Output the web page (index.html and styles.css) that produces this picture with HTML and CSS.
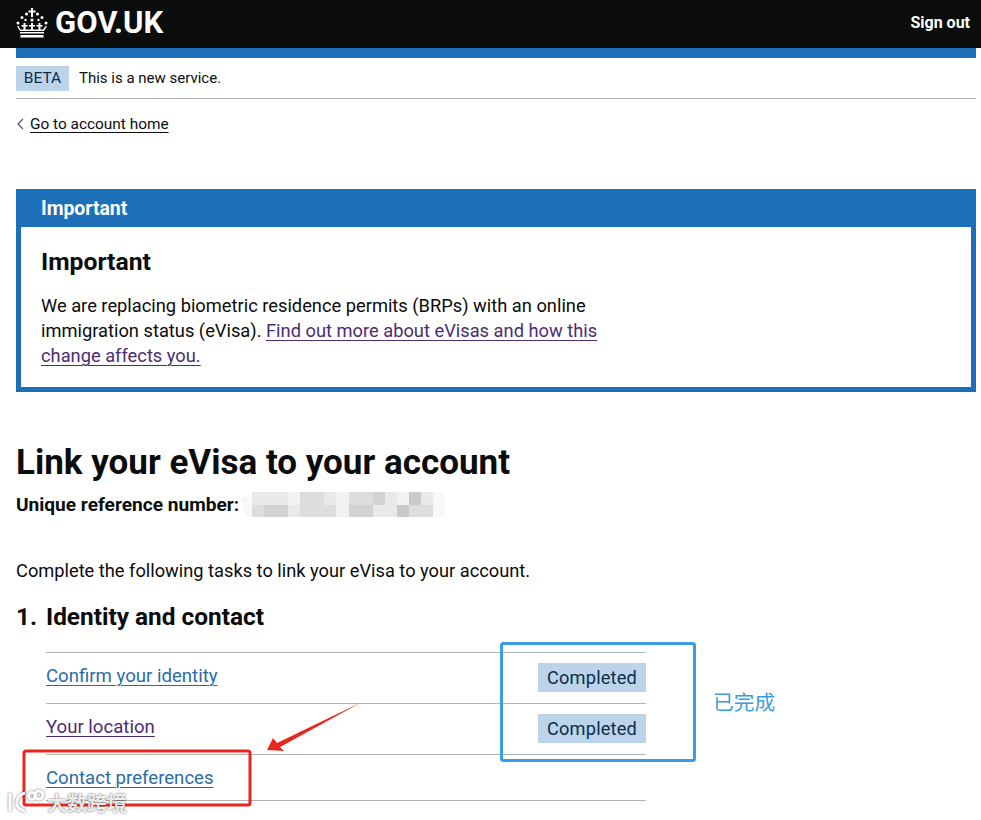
FILE: index.html
```html
<!DOCTYPE html>
<html lang="en">
<head>
<meta charset="utf-8">
<title>Link your eVisa to your account</title>
<link rel="stylesheet" href="styles.css">
</head>
<body>
<header class="masthead">
  <a class="logo" href="#">
    <svg class="crown" viewBox="0 0 32 30" width="32" height="30" aria-hidden="true">
      <g fill="#fff">
        <rect x="15" y="0" width="2" height="9"/><rect x="12.5" y="2.5" width="7" height="2"/>
        <circle cx="10.5" cy="6" r="1.5"/><circle cx="21.5" cy="6" r="1.5"/>
        <circle cx="6" cy="9.5" r="1.5"/><circle cx="26" cy="9.5" r="1.5"/>
        <circle cx="2" cy="15" r="1.5"/><circle cx="30" cy="15" r="1.5"/>
        <circle cx="16" cy="12" r="1.6"/><circle cx="9.5" cy="12" r="1.2"/><circle cx="22.5" cy="12" r="1.2"/>
        <rect x="15" y="15" width="2" height="8"/><rect x="13" y="17" width="6" height="1.6"/>
        <rect x="7.5" y="15" width="2" height="8"/><rect x="5.5" y="17" width="6" height="1.6"/>
        <rect x="22.5" y="15" width="2" height="8"/><rect x="20.5" y="17" width="6" height="1.6"/>
        <path d="M1 18l3 5h24l3-5-1.5 0-2.5 3.5H4.500L2.500 18z"/>
        <rect x="4" y="24" width="24" height="1.500"/>
        <rect x="4.500" y="27" width="23" height="2.500"/>
      </g>
    </svg>
    <span class="logo-text">GOV.UK</span>
  </a>
  <a class="signout" href="#">Sign out</a>
</header>

<div class="page">
  <div class="service-bar"></div>
  <div class="phase">
    <strong class="phase-tag">BETA</strong>
    <span class="phase-text">This is a new service.</span>
  </div>
  <nav class="back">
    <svg class="chevron" viewBox="0 0 8 12" width="8" height="12" aria-hidden="true"><path d="M7 1 2 6l5 5" fill="none" stroke="#505a5f" stroke-width="1.2"/></svg>
    <a href="#">Go to account home</a>
  </nav>

  <section class="banner">
    <h2 class="banner-title">Important</h2>
    <div class="banner-body">
      <h3 class="banner-heading">Important</h3>
      <p class="banner-text">We are replacing biometric residence permits (BRPs) with an online immigration status (eVisa). <a class="visited" href="#">Find out more about eVisas and how this change affects you.</a></p>
    </div>
  </section>

  <main class="content">
    <h1 class="title">Link your eVisa to your account</h1>
    <p class="reference">Unique reference number:
      <svg class="mosaic" viewBox="0 0 17 2" width="205" height="25" shape-rendering="crispEdges" aria-hidden="true">
        <path fill="#f7f8f8" d="M0 .4h1V2H.5zM16 0h1v2h-1z"/>
        <path fill="#f1f2f2" d="M4 0h1v1H4zM8 0h1v2H8zM13 0h1v1h-1z"/>
        <path fill="#e8e9e9" d="M1 0h3v1H1zM4 1h1v1H4zM12 0h1v1h-1zM7 0h1v1H7zM11 1h2v1h-2zM15 0h1v1h-1z"/>
        <path fill="#dcdddd" d="M5 0h2v1H5zM9 0h2v1H9zM1 1h1v1H1zM5 1h3v1H5zM14 1h2v1h-2z"/>
        <path fill="#d1d2d2" d="M2 1h2v1H2zM9 1h2v1H9zM11 0h1v1h-1z"/>
        <path fill="#c9caca" d="M14 0h1v1h-1zM13 1h1v1h-1z"/>
      </svg>
    </p>
    <p class="intro">Complete the following tasks to link your eVisa to your account.</p>

    <ol class="sections">
      <li class="section">
        <h2 class="section-title"><span class="section-number">1.</span>Identity and contact</h2>
        <ul class="tasks">
          <li class="task"><a class="task-link" href="#">Confirm your identity</a><strong class="status">Completed</strong></li>
          <li class="task"><a class="task-link visited" href="#">Your location</a><strong class="status">Completed</strong></li>
          <li class="task task-plain"><a class="task-link" href="#">Contact preferences</a></li>
        </ul>
      </li>
    </ol>
  </main>
</div>

<svg class="marks" viewBox="0 0 981 820" width="981" height="820" aria-hidden="true">
  <rect x="501.500" y="643.500" width="193" height="117" rx="2" fill="none" stroke="#3b9ce8" stroke-width="3"/>
  <rect x="24" y="751" width="226" height="54" rx="2" fill="none" stroke="#e8281f" stroke-width="3"/>
  <path d="M362 702 280 747 284 751 267 750 273 738 277 743z" fill="#e8281f"/>
  <g class="wm-icon" fill="none" stroke="#fff" stroke-width="3">
    <path d="M10 793v18M25 793c-10 2-12 16 0 18"/>
    <circle cx="32" cy="796" r="3.500"/><circle cx="39" cy="795" r="4"/>
  </g>
</svg>
<span class="note">已完成</span>
<span class="watermark">大数跨境</span>
</body>
</html>
```

FILE: styles.css
```css
* { box-sizing: border-box; }

html, body { margin: 0; padding: 0; }

body {
  position: relative;
  min-height: 820px;
  overflow-x: hidden;
  background: #fff;
  color: #0b0c0c;
  font-family: Roboto, "Liberation Sans", sans-serif;
  font-size: 18.6px;
  line-height: 25px;
}

a { color: inherit; text-underline-offset: 3px; text-decoration-thickness: 1px; }

.masthead {
  display: flex;
  align-items: center;
  justify-content: space-between;
  height: 48px;
  padding: 0 11px 2px 16px;
  background: #0b0c0c;
  color: #fff;
}

.logo { display: flex; align-items: center; gap: 7px; color: #fff; text-decoration: none; }
.crown { display: block; }
.logo-text { font-size: 31px; line-height: 30px; font-weight: 700; }
.signout { color: #fff; text-decoration: none; font-size: 16px; font-weight: 700; margin-top: -2px; }

.page { width: 960px; margin-left: 16px; }

.service-bar { height: 10px; background: #1d70b8; }

.phase {
  display: flex;
  align-items: center;
  gap: 10px;
  height: 41px;
  border-bottom: 1px solid #b1b4b6;
  font-size: 15.500px;
}

.phase-text { font-size: 15px; }

.phase-tag {
  width: 53px;
  height: 25px;
  background: #bbd4ea;
  color: #0c2d4a;
  font-weight: 400;
  line-height: 24px;
  text-align: center;
}

.back {
  display: flex;
  align-items: center;
  gap: 6px;
  height: 50px;
  font-size: 15.400px;
}

.banner {
  margin-top: 40px;
  border: 5px solid #1d70b8;
}

.banner-title {
  margin: 0;
  height: 33px;
  padding: 0 20px;
  background: #1d70b8;
  color: #fff;
  font-size: 19.400px;
  line-height: 30px;
  font-weight: 700;
}

.banner-body { padding: 20px 20px 19px; }

.banner-heading { margin: 0 0 16px; font-size: 24.700px; line-height: 30px; font-weight: 700; }

.banner-text { margin: 0; width: 570px; font-size: 18.300px; }

.visited { color: #4c2c73; }

.content { width: 630px; }

.title {
  margin: 51px 0 0;
  font-size: 35px;
  line-height: 40px;
  font-weight: 700;
  white-space: nowrap;
}

.reference {
  display: flex;
  align-items: center;
  margin: 9px 0 0;
  height: 25px;
  font-size: 19.100px;
  font-weight: 700;
}

.mosaic { flex: none; margin-left: 1px; }

.intro { margin: 41px 0 0; font-size: 18.250px; }

.sections { list-style: none; margin: 0; padding: 0; }

.section-title {
  display: flex;
  margin: 19px 0 0;
  font-size: 24.400px;
  line-height: 30px;
  font-weight: 700;
}

.section-number { width: 30px; }

.tasks {
  list-style: none;
  margin: 20px 0 0 30px;
  padding: 0;
  border-top: 1px solid #b1b4b6;
}

.task {
  display: flex;
  align-items: flex-start;
  justify-content: space-between;
  height: 51px;
  padding-top: 10px;
  border-bottom: 1px solid #b1b4b6;
}

.task-plain { height: 46px; }

.task-link { margin-top: 1px; color: #2c6ca6; line-height: 25px; }
.task-link.visited { color: #4c2c73; }

.status {
  width: 108px;
  height: 29px;
  background: #bbd4ea;
  color: #0c2d4a;
  font-size: 18.200px;
  font-weight: 400;
  line-height: 29px;
  text-align: center;
  letter-spacing: 0.2px;
}

.marks { position: absolute; left: 0; top: 0; pointer-events: none; }
.wm-icon { filter: drop-shadow(0 0 1px rgba(0, 0, 0, 0.6)); }

.note {
  position: absolute;
  left: 713px;
  top: 687px;
  color: #3b9ce0;
  font-family: "Noto Sans CJK SC", sans-serif;
  font-size: 20.700px;
  line-height: 28px;
}

.watermark {
  position: absolute;
  left: 47px;
  top: 793px;
  color: rgba(255, 255, 255, 0.9);
  font-family: "Noto Sans CJK SC", sans-serif;
  font-size: 20px;
  line-height: 20px;
  font-weight: 700;
  text-shadow: 0 0 2px rgba(0, 0, 0, 0.7);
}
```
